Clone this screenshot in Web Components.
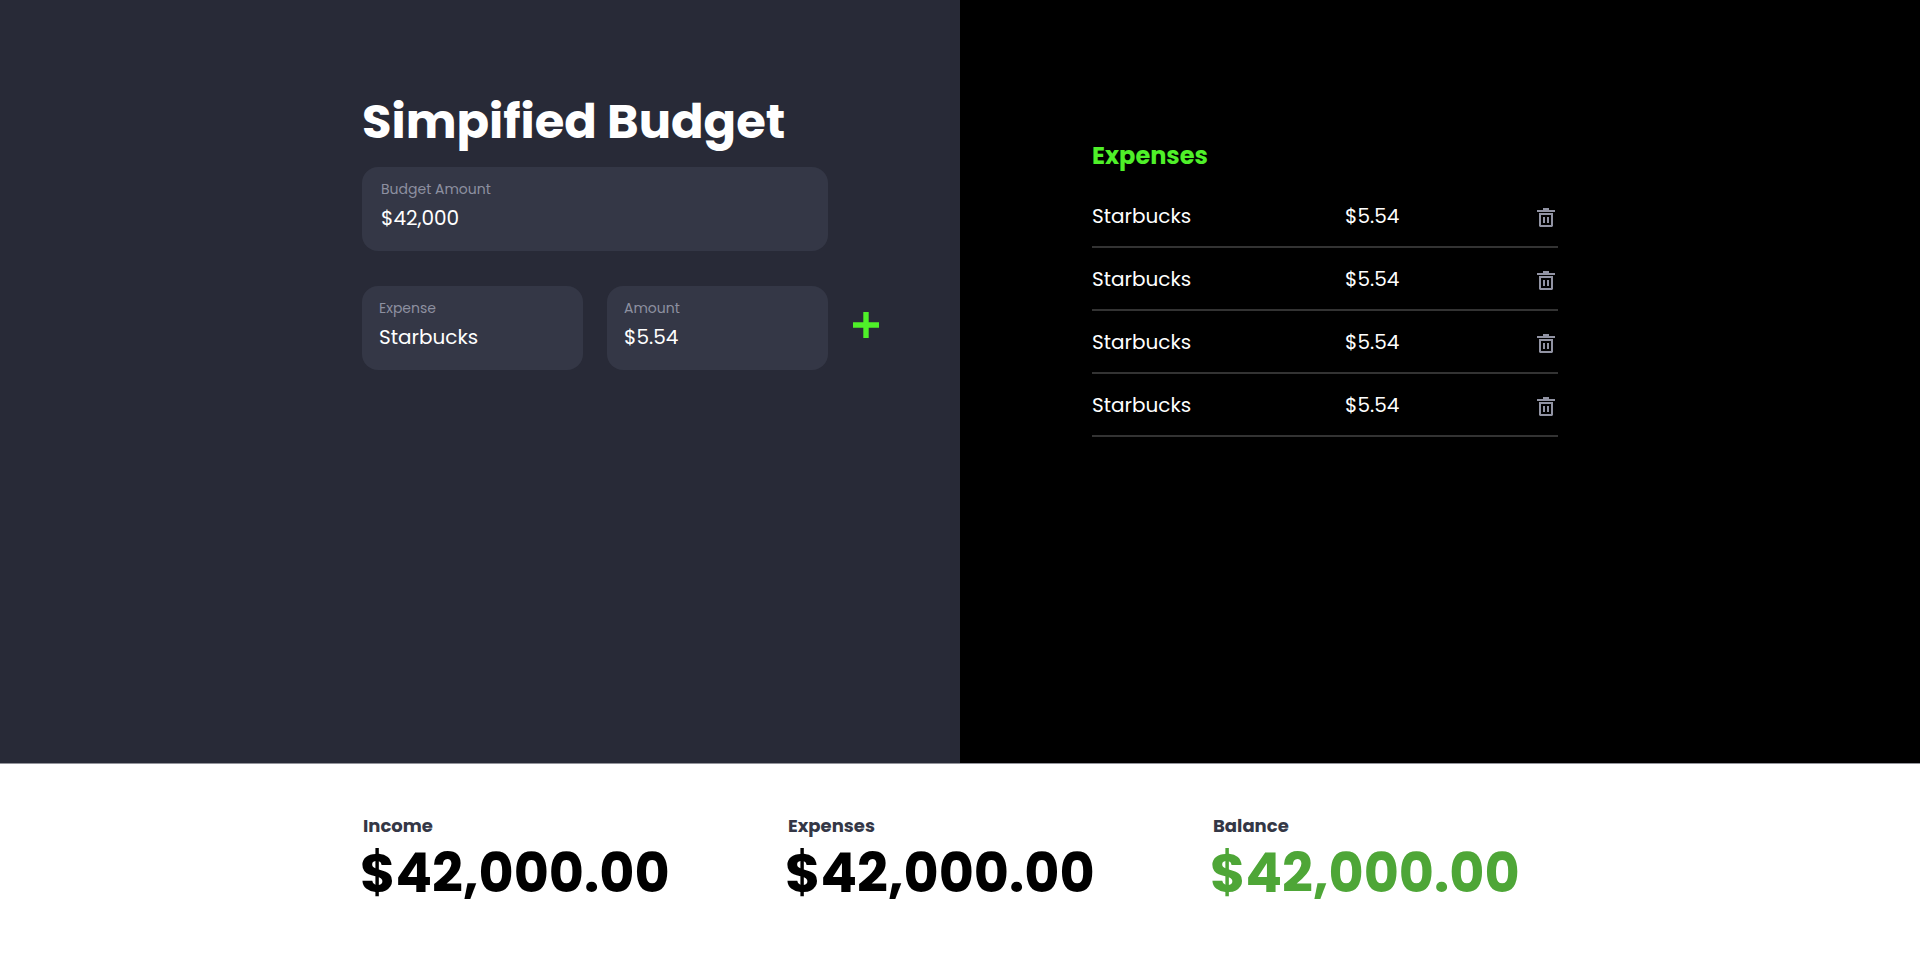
<!DOCTYPE html>
<html lang="en">
<head>
<meta charset="utf-8">
<meta name="viewport" content="width=device-width, initial-scale=1">
<title>Simpified Budget</title>
<style>
  html, body { margin: 0; min-height: 100%; }
  body {
    font-family: Poppins, Inter, sans-serif;
    --night: #282a37;
    --field: #343746;
    --muted: #8d90a0;
    --lime: #4ff029;
    --green: #4ea637;
    --content: 1196px;
    --column: 466px;
  }
</style>
</head>
<body>
<budget-app>
  <budget-form slot="form"></budget-form>
  <expense-list slot="list"></expense-list>
  <total-figure slot="totals" label="Income">$42,000.00</total-figure>
  <total-figure slot="totals" label="Expenses">$42,000.00</total-figure>
  <total-figure slot="totals" label="Balance" class="balance">$42,000.00</total-figure>
</budget-app>

<script>
class ShadowElement extends HTMLElement {
  constructor() {
    super();
    this.attachShadow({ mode: "open" });
  }
  connectedCallback() {
    this.shadowRoot.innerHTML = `<style>*{box-sizing:border-box}</style>` + this.render();
  }
}

class BudgetApp extends ShadowElement {
  render() {
    return `
    <style>
      :host { display: flex; flex-direction: column; min-height: 100vh; background: #fff; }
      main { flex: 1; display: grid; grid-template-columns: 1fr 1fr; }
      .left { background: var(--night); padding: 90px 24px 48px max(24px, calc(50vw - var(--content) / 2)); }
      .right { background: #000; color: #fff; padding: 140px max(24px, calc(50vw - var(--content) / 2)) 48px 24px;
        display: flex; justify-content: flex-end; align-items: flex-start; }
      footer { padding: 48px 24px 53px; border-top: 1px solid #93949b; }
      .totals { max-width: var(--content); margin: 0 auto; display: grid;
        grid-template-columns: repeat(3, 1fr); column-gap: 79px; }
    </style>
    <main>
      <section class="left"><slot name="form"></slot></section>
      <section class="right"><slot name="list"></slot></section>
    </main>
    <footer><div class="totals"><slot name="totals"></slot></div></footer>`;
  }
}

class BudgetField extends ShadowElement {
  render() {
    return `
    <style>
      :host { display: block; min-width: 0; background: var(--field); border-radius: 16px; padding: 12px 17px 19px; }
      :host(.wide) { padding-left: 19px; }
      label { display: block; font-size: 14px; line-height: 20px; color: var(--muted); }
      input { display: block; width: 100%; height: 28px; margin-top: 5px; padding: 0; border: 0; outline: 0;
        background: none; color: #fff; font: inherit; font-size: 20px; line-height: 28px; }
    </style>
    <label for="value">${this.getAttribute("label")}</label>
    <input id="value" type="text" value="${this.getAttribute("value")}">`;
  }
}

class BudgetForm extends ShadowElement {
  render() {
    return `
    <style>
      :host { display: block; }
      h1 { margin: 0 0 13px; font-size: 48px; line-height: 64px; font-weight: 700; color: #fff; white-space: nowrap; }
      form { display: grid; grid-template-columns: minmax(0, 221px) minmax(0, 221px) 28px; column-gap: 24px; row-gap: 35px; align-items: center; }
      .wide { grid-column: 1 / 3; }
      .wide + * { grid-column-start: 1; }
      button { display: grid; width: 28px; justify-items: center; padding: 0 0 6px; border: 0; background: none; cursor: pointer; }
      svg { display: block; }
    </style>
    <h1>Simpified Budget</h1>
    <form>
      <budget-field class="wide" label="Budget Amount" value="$42,000"></budget-field>
      <budget-field label="Expense" value="Starbucks"></budget-field>
      <budget-field label="Amount" value="$5.54"></budget-field>
      <button type="button" aria-label="Add expense">
        <svg width="26" height="26" viewBox="0 0 26 26" fill="#4ff029"><path d="M10.3 0h5.4v10.3H26v5.4H15.7V26h-5.4V15.7H0v-5.4h10.3z"/></svg>
      </button>
    </form>`;
  }
}

class ExpenseList extends ShadowElement {
  render() {
    const row = `
      <tr>
        <td>Starbucks</td>
        <td>$5.54</td>
        <td class="action"><button type="button" aria-label="Delete expense">
          <svg width="18" height="19" viewBox="0 0 18 19" fill="#9193a3">
            <path d="M6 0h6v2h6v2H0V2h6z"/>
            <path fill-rule="evenodd" d="M2 5h14v13l-1 1H3l-1-1zM4 7v10h10V7z"/>
            <path d="M6 9h2v6H6zM10 9h2v6h-2z"/>
          </svg>
        </button></td>
      </tr>`;
    return `
    <style>
      :host { display: block; width: 100%; max-width: var(--column); }
      h2 { margin: 0 0 13px; font-size: 24px; line-height: 32px; font-weight: 700; color: var(--lime); }
      table { width: 100%; border-spacing: 0; table-layout: fixed; }
      td { height: 63px; padding: 0; border-bottom: 2px solid #333; font-size: 20px; line-height: 28px; vertical-align: middle; }
      td:first-child { width: 253px; }
      .action { padding: 4px 3px 0 0; }
      button { display: block; margin-left: auto; padding: 0; border: 0; background: none; cursor: pointer; }
      svg { display: block; }
    </style>
    <h2>Expenses</h2>
    <table><tbody>${row.repeat(4)}</tbody></table>`;
  }
}

class TotalFigure extends ShadowElement {
  render() {
    return `
    <style>
      :host { display: block; color: #000; }
      :host(.balance) { color: var(--green); }
      h3 { margin: 0; padding-left: 1px; font-size: 18px; line-height: 28px; font-weight: 700; color: var(--field); }
      p { margin: 0 0 0 -2px; font-size: 54px; line-height: 67px; font-weight: 700; white-space: nowrap; }
    </style>
    <h3>${this.getAttribute("label")}</h3>
    <p><slot></slot></p>`;
  }
}

customElements.define("budget-field", BudgetField);
customElements.define("budget-form", BudgetForm);
customElements.define("expense-list", ExpenseList);
customElements.define("total-figure", TotalFigure);
customElements.define("budget-app", BudgetApp);
</script>
</body>
</html>
